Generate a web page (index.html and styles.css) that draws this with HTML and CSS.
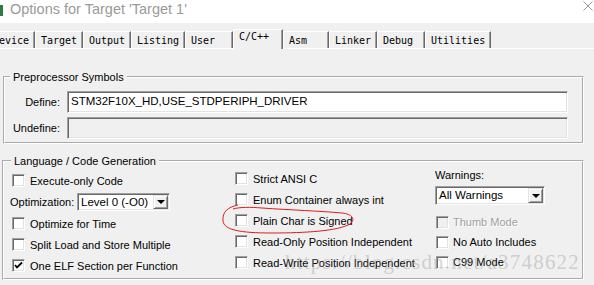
FILE: index.html
```html
<!DOCTYPE html>
<html lang="en">
<head>
    <meta charset="UTF-8">
    <meta name="viewport" content="width=device-width, initial-scale=1.0">
    <title>Options for Target 'Target 1'</title>
    <link rel="stylesheet" href="styles.css">
</head>
<body>
    <div class="titlebar">
        <span class="app-icon"></span>
        <span class="title">Options for Target 'Target 1'</span>
        <svg class="close" width="10" height="10" viewBox="0 0 10 10">
            <path d="M0.5 0.5L9.5 9.5M9.5 0.5L0.5 9.5" stroke="#9a9a9a" stroke-width="1" fill="none"/>
        </svg>
    </div>

    <div class="tabs">
        <div class="tab tab-device">Device</div>
        <div class="tab">Target</div>
        <div class="tab">Output</div>
        <div class="tab tab-listing">Listing</div>
        <div class="tab">User</div>
        <div class="tab tab-active">C/C++</div>
        <div class="tab tab-asm">Asm</div>
        <div class="tab">Linker</div>
        <div class="tab">Debug</div>
        <div class="tab tab-utilities">Utilities</div>
    </div>

    <div class="panel">
        <fieldset class="group group-pre">
            <legend>Preprocessor Symbols</legend>
            <div class="symbols">
                <label class="sym-label">Define:</label>
                <div class="edit">STM32F10X_HD,USE_STDPERIPH_DRIVER</div>
                <label class="sym-label">Undefine:</label>
                <div class="edit edit-disabled"></div>
            </div>
        </fieldset>

        <fieldset class="group group-lang">
            <legend>Language / Code Generation</legend>
            <div class="cols">
                <div class="col col-1">
                    <div class="check"><span class="box"></span>Execute-only Code</div>
                    <div class="opt-row">
                        <span class="opt-label">Optimization:</span>
                        <div class="combo combo-opt">
                            <span class="combo-text">Level 0 (-O0)</span>
                            <span class="combo-btn"><span class="arrow"></span></span>
                        </div>
                    </div>
                    <div class="check"><span class="box"></span>Optimize for Time</div>
                    <div class="check"><span class="box"></span>Split Load and Store Multiple</div>
                    <div class="check">
                        <span class="box">
                            <svg width="11" height="11" viewBox="0 0 11 11"><path d="M2 5L4 7.5L9 2.5" stroke="#000" stroke-width="1.8" fill="none"/></svg>
                        </span>One ELF Section per Function
                    </div>
                </div>

                <div class="col col-2">
                    <div class="check"><span class="box"></span>Strict ANSI C</div>
                    <div class="check"><span class="box"></span>Enum Container always int</div>
                    <div class="check"><span class="box"></span>Plain Char is Signed</div>
                    <div class="check"><span class="box"></span>Read-Only Position Independent</div>
                    <div class="check"><span class="box"></span>Read-Write Position Independent</div>
                </div>

                <div class="col col-3">
                    <div class="warn-label">Warnings:</div>
                    <div class="combo combo-warn">
                        <span class="combo-text">All Warnings</span>
                        <span class="combo-btn"><span class="arrow"></span></span>
                    </div>
                    <div class="warn-checks">
                        <div class="check check-disabled"><span class="box"></span>Thumb Mode</div>
                        <div class="check"><span class="box"></span>No Auto Includes</div>
                        <div class="check"><span class="box"></span>C99 Mode</div>
                    </div>
                </div>
            </div>
        </fieldset>
    </div>

    <!-- hand drawn mark over the screenshot -->
    <svg class="scribble" width="594" height="285" viewBox="0 0 594 285">
        <path d="M238 205 C228 207 222 212 223 221 C224 230 240 233 272 233 C305 233 338 231 350 224 C356 219 352 214 342 213 C320 211 290 210 262 208 C250 207 240 207 233 209" stroke="#e21a1a" stroke-width="1" fill="none"/>
    </svg>
    <div class="watermark">https://blog.csdn.net/a3748622</div>
</body>
</html>
```

FILE: styles.css
```css
* {
    box-sizing: border-box;
}

body {
    margin: 0;
    width: 594px;
    height: 285px;
    overflow: hidden;
    position: relative;
    background: #f0f0f0;
    font-family: "Liberation Sans", Arial, sans-serif;
    font-size: 11px;
    color: #000;
}

.titlebar {
    height: 23px;
    background: #fff;
    display: flex;
    align-items: center;
}

.app-icon {
    width: 3px;
    height: 11px;
    background: #2f7d3c;
    margin-top: -2px;
}

.title {
    margin-left: 7px;
    margin-top: -5px;
    font-size: 14.5px;
    color: #9a9a9a;
}

.close {
    margin-left: auto;
    margin-right: 1px;
    margin-top: -11px;
}

/* tab strip */
.tabs {
    margin-top: 6px;
    height: 20px;
    display: flex;
    align-items: flex-end;
    border-bottom: 1px solid #fff;
    font-family: "DejaVu Sans Mono", "Liberation Mono", monospace;
    font-size: 10px;
}

.tab {
    flex: none;
    width: 48px;
    height: 17px;
    padding: 1px 0 0 5px;
    line-height: 15px;
    border-top: 1px solid #fff;
    border-left: 1px solid #fff;
    border-right: 1px solid #696969;
    box-shadow: inset -1px 0 #a0a0a0;
    white-space: nowrap;
    overflow: hidden;
}

.tab-device {
    margin-left: -13px;
}

.tab-listing {
    width: 54px;
}

.tab-asm {
    width: 46px;
}

.tab-utilities {
    width: 66px;
}

.tab-active {
    width: 50px;
    height: 20px;
    margin-bottom: -1px;
    padding-top: 0;
    line-height: 14px;
    background: #f0f0f0;
    position: relative;
    z-index: 1;
}

/* group boxes */
.panel {
    padding-top: 21px;
}

.group {
    margin: 0;
    padding: 0;
    border: 2px groove #fff;
    min-width: 0;
}

.group legend {
    padding: 0 3px;
    line-height: 14px;
}

.group-pre {
    margin-left: 3px;
    width: 581px;
    padding: 7px 14px 3px 0;
}

.group-pre legend {
    margin-left: 5px;
}

.group-lang {
    margin-top: 10px;
    margin-left: 2px;
    width: 582px;
    padding-bottom: 2px;
}

.group-lang legend {
    margin-left: 7px;
}

.symbols {
    display: grid;
    grid-template-columns: 55px 1fr;
    column-gap: 7px;
    row-gap: 4px;
}

.sym-label {
    text-align: right;
    line-height: 22px;
    color: #000;
}

.edit {
    height: 22px;
    background: #fff;
    border: 1px solid;
    border-color: #a0a0a0 #fff #fff #a0a0a0;
    box-shadow: inset 1px 1px #696969, inset -1px -1px #e3e3e3;
    padding-left: 3px;
    line-height: 19px;
    font-size: 11.5px;
    white-space: nowrap;
}

.edit-disabled {
    background: #f0f0f0;
}

.cols {
    display: grid;
    grid-template-columns: 225px 200px 1fr;
    padding-left: 6px;
}

.col-1 {
    padding-top: 2px;
}

.col-1 .check {
    margin-left: 2px;
}

.check {
    display: flex;
    align-items: center;
    gap: 5px;
    height: 21px;
    white-space: nowrap;
}

.box {
    flex: none;
    width: 13px;
    height: 13px;
    background: #fff;
    border: 1px solid;
    border-color: #a0a0a0 #fff #fff #a0a0a0;
    box-shadow: inset 1px 1px #696969, inset -1px -1px #e3e3e3;
    display: flex;
    align-items: center;
    justify-content: center;
}

.box svg {
    display: block;
}

.check-disabled {
    color: #a0a0a0;
    text-shadow: 1px 1px #fff;
}

.check-disabled .box {
    background: #f0f0f0;
}

.opt-row {
    display: flex;
    align-items: center;
    height: 22px;
}

.opt-label {
    width: 67px;
}

/* drop down lists */
.combo {
    display: flex;
    background: #fff;
    border: 1px solid;
    border-color: #a0a0a0 #fff #fff #a0a0a0;
    box-shadow: inset 1px 1px #696969, inset -1px -1px #e3e3e3;
    padding: 1px;
}

.combo-opt {
    width: 93px;
    height: 18px;
}

.combo-warn {
    width: 110px;
    height: 19px;
    margin-top: 4px;
}

.combo-text {
    flex: 1;
    padding-left: 2px;
    line-height: 14px;
    font-size: 11.5px;
    white-space: nowrap;
}

.combo-btn {
    flex: none;
    width: 15px;
    background: #f0f0f0;
    border: 1px solid;
    border-color: #e3e3e3 #696969 #696969 #e3e3e3;
    box-shadow: inset 1px 1px #fff, inset -1px -1px #a0a0a0;
    display: flex;
    align-items: center;
    justify-content: center;
}

.arrow {
    width: 0;
    height: 0;
    border-left: 4px solid transparent;
    border-right: 4px solid transparent;
    border-top: 4px solid #000;
}

.warn-label {
    line-height: 14px;
}

.warn-checks {
    margin-top: 7px;
}

.warn-checks .check {
    height: 20px;
    margin-left: 1px;
    gap: 4px;
}

/* overlays from the screenshot */
.scribble {
    position: absolute;
    top: 0;
    left: 0;
    pointer-events: none;
}

.watermark {
    position: absolute;
    left: 285px;
    top: 250px;
    font-family: "Liberation Serif", "Times New Roman", serif;
    font-size: 21px;
    letter-spacing: 1.2px;
    color: rgba(150, 150, 150, 0.4);
    white-space: nowrap;
    pointer-events: none;
}
```
